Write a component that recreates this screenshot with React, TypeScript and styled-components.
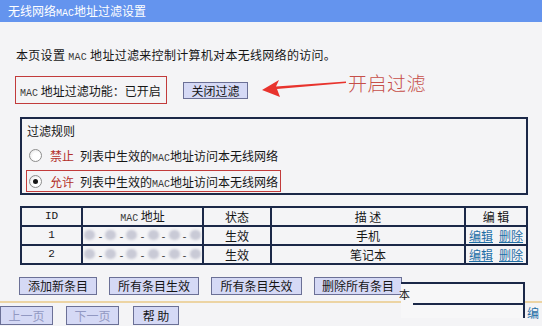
import React from "react";
import styled, { createGlobalStyle } from "styled-components";

const GlobalStyle = createGlobalStyle`
  html, body { margin: 0; padding: 0; }
  body {
    background: #f4f4f6;
    font-family: "Noto Sans CJK SC", "Liberation Sans", sans-serif;
    font-size: 12px;
    color: #161616;
  }
`;

const Page = styled.div`
  position: relative;
  width: 542px;
  height: 326px;
  overflow: hidden;
`;

const TitleBar = styled.div`
  height: 22px;
  line-height: 22px;
  padding-left: 8px;
  background: #6494ee;
  color: #fff;
  font-size: 12px;
`;

const Mac = styled.span<{ $light?: boolean }>`
  font-family: "Liberation Mono", "DejaVu Sans Mono", monospace;
  font-size: 10px;
  color: ${(p) => (p.$light ? "#fff" : "#3a3a3a")};
`;

const Intro = styled.p`
  margin: 25px 0 0 16px;
  line-height: 16px;
  letter-spacing: 0.3px;
`;

const StatusRow = styled.div`
  display: flex;
  align-items: center;
  height: 28px;
  margin-top: 10px;
  padding-left: 15px;
`;

const StatusBox = styled.div`
  box-sizing: border-box;
  width: 152px;
  height: 28px;
  display: flex;
  align-items: center;
  padding-left: 4px;
  border: 1px solid #c23b3b;
`;

const Btn = styled.button<{ $w: number; $muted?: boolean }>`
  box-sizing: border-box;
  width: ${(p) => p.$w}px;
  height: 18px;
  padding: 0;
  border: 1px solid #6b7096;
  background: #d5d9f5;
  color: ${(p) => (p.$muted ? "#9298c2" : "#151515")};
  font-family: inherit;
  font-size: 12px;
  line-height: 16px;
  flex: none;
`;

const ToggleBtn = styled(Btn)`
  height: 17px;
  margin-left: 16px;
`;

const Arrow = styled.svg`
  flex: none;
  align-self: flex-start;
  margin-left: 10px;
`;

const Callout = styled.span`
  align-self: flex-start;
  margin-top: -5px;
  font-size: 19px;
  font-weight: 300;
  line-height: 24px;
  color: #c64f49;
  letter-spacing: 0.5px;
`;

const RuleBox = styled.div`
  box-sizing: border-box;
  margin: 13px 14px 0 20px;
  padding: 4px 4px 1px 4px;
  border: 2px solid #1b2848;
`;

const RuleTitle = styled.div`
  padding-left: 1px;
  line-height: 16px;
`;

const RuleRow = styled.div<{ $marked?: boolean }>`
  box-sizing: border-box;
  display: flex;
  align-items: center;
  width: 255px;
  height: 22px;
  margin-top: ${(p) => (p.$marked ? 4 : 5)}px;
  padding-left: 2px;
  border: 1px solid ${(p) => (p.$marked ? "#c23b3b" : "transparent")};
`;

const Radio = styled.span<{ $checked?: boolean }>`
  box-sizing: border-box;
  width: 13px;
  height: 13px;
  border-radius: 50%;
  border: 1px solid #8d8d8d;
  background: radial-gradient(circle at 60% 60%, #ffffff 40%, #dedede);
  display: inline-flex;
  align-items: center;
  justify-content: center;
  flex: none;
  &::after {
    content: "";
    width: 5px;
    height: 5px;
    border-radius: 50%;
    background: #161616;
    display: ${(p) => (p.$checked ? "block" : "none")};
  }
`;

const Verb = styled.span`
  margin: 0 6px 0 8px;
  color: #b3302a;
`;

const Grid = styled.div`
  display: grid;
  grid-template-columns: 59px 119px 66px 192px 60px;
  grid-auto-rows: 17px;
  gap: 2px;
  padding: 2px;
  width: 508px;
  box-sizing: border-box;
  margin: 11px 0 0 20px;
  background: #1b2848;
`;

const Cell = styled.div<{ $mono?: boolean }>`
  background: #f4f4f6;
  display: flex;
  align-items: center;
  justify-content: center;
  line-height: 17px;
  font-family: ${(p) =>
    p.$mono ? '"Liberation Mono", monospace' : "inherit"};
  font-size: ${(p) => (p.$mono ? "11px" : "12px")};
  white-space: pre;
`;

const Link = styled.a`
  color: #1f6fa6;
  text-decoration: underline;
  & + & {
    margin-left: 6px;
  }
`;

const Blob = styled.span`
  display: inline-block;
  width: 11px;
  height: 10px;
  border-radius: 5px;
  background: #c9cad6;
  filter: blur(1px);
`;

const Dash = styled.span`
  margin: 0 2px;
  color: #444;
  font-family: "Liberation Mono", monospace;
  font-size: 10px;
`;

const ActionRow = styled.div`
  display: flex;
  gap: 12px;
  margin-top: 12px;
  padding-left: 19px;
`;

const Footer = styled.div`
  display: flex;
  align-items: center;
  margin-top: 6px;
  padding: 3px 0 2px;
  border-top: 2px solid #ecd4a4;
  border-bottom: 2px solid #ecd4a4;
`;

const FootBtn = styled(Btn)<{ $gap: number }>`
  height: 19px;
  margin-left: ${(p) => p.$gap}px;
`;

const Ghost = styled.div`
  position: absolute;
  left: 401px;
  top: 282px;
  width: 124px;
  height: 36px;
  box-sizing: border-box;
  border-top: 2px solid #1b2848;
  border-right: 2px solid #1b2848;
  background: #f7f7f8;
`;

const GhostLine = styled.div`
  position: absolute;
  left: 12px;
  right: 0;
  top: 19px;
  height: 2px;
  background: #1b2848;
`;

const GhostChar = styled.span`
  position: absolute;
  left: -2px;
  top: 3px;
  font-size: 11px;
  line-height: 14px;
`;

const GhostEdge = styled.div`
  position: absolute;
  left: 126px;
  top: 22px;
  font-size: 12px;
  line-height: 14px;
  color: #1f6fa6;
  white-space: nowrap;
`;

const MacMask = () => (
  <span>
    {[0, 1, 2, 3, 4, 5].map((i) => (
      <React.Fragment key={i}>
        {i > 0 && <Dash>-</Dash>}
        <Blob />
      </React.Fragment>
    ))}
  </span>
);

const entries = [
  { id: "1", desc: "手机" },
  { id: "2", desc: "笔记本" },
];

export default function App() {
  return (
    <Page>
      <GlobalStyle />
      <TitleBar>
        无线网络<Mac $light>MAC</Mac>地址过滤设置
      </TitleBar>
      <Intro>
        本页设置 <Mac>MAC</Mac> 地址过滤来控制计算机对本无线网络的访问。
      </Intro>
      <StatusRow>
        <StatusBox>
          <span>
            <Mac>MAC</Mac> 地址过滤功能：已开启
          </span>
        </StatusBox>
        <ToggleBtn $w={65}>关闭过滤</ToggleBtn>
        <Arrow width="90" height="28" viewBox="0 0 90 28">
          <polygon
            points="4,14 21,4 18,10.5 88,5.6 88,7 19,13 22,21"
            fill="#e8332d"
          />
        </Arrow>
        <Callout>开启过滤</Callout>
      </StatusRow>

      <RuleBox>
        <RuleTitle>过滤规则</RuleTitle>
        <RuleRow>
          <Radio />
          <Verb>禁止</Verb>
          <span>
            列表中生效的<Mac>MAC</Mac>地址访问本无线网络
          </span>
        </RuleRow>
        <RuleRow $marked>
          <Radio $checked />
          <Verb>允许</Verb>
          <span>
            列表中生效的<Mac>MAC</Mac>地址访问本无线网络
          </span>
        </RuleRow>
      </RuleBox>

      <Grid>
        <Cell $mono>ID</Cell>
        <Cell>
          <span>
            <Mac>MAC</Mac> 地址
          </span>
        </Cell>
        <Cell>状态</Cell>
        <Cell>描 述</Cell>
        <Cell>编 辑</Cell>
        {entries.map((e) => (
          <React.Fragment key={e.id}>
            <Cell $mono>{e.id}</Cell>
            <Cell>
              <MacMask />
            </Cell>
            <Cell>生效</Cell>
            <Cell>{e.desc}</Cell>
            <Cell>
              <Link>编辑</Link>
              <Link>删除</Link>
            </Cell>
          </React.Fragment>
        ))}
      </Grid>

      <ActionRow>
        <Btn $w={78}>添加新条目</Btn>
        <Btn $w={90}>所有条目生效</Btn>
        <Btn $w={91}>所有条目失效</Btn>
        <Btn $w={88}>删除所有条目</Btn>
      </ActionRow>

      <Footer>
        <FootBtn $w={53} $gap={0} $muted>
          上一页
        </FootBtn>
        <FootBtn $w={53} $gap={13} $muted>
          下一页
        </FootBtn>
        <FootBtn $w={46} $gap={14}>
          帮 助
        </FootBtn>
      </Footer>

      <Ghost>
        <GhostChar>本</GhostChar>
        <GhostLine />
        <GhostEdge>编</GhostEdge>
      </Ghost>
    </Page>
  );
}
